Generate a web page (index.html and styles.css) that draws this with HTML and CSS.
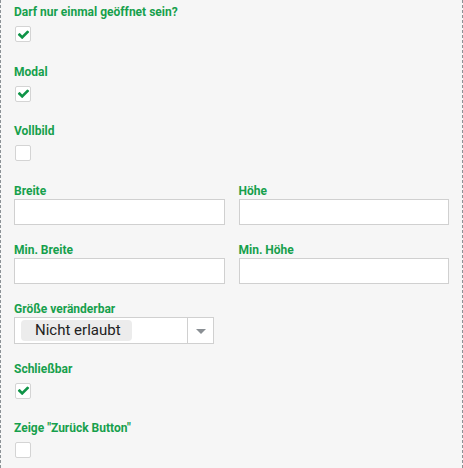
FILE: index.html
```html
<!DOCTYPE html>
<html lang="de">
<head>
    <meta charset="UTF-8">
    <meta name="viewport" content="width=device-width, initial-scale=1.0">
    <title>Fenster Einstellungen</title>
    <link rel="stylesheet" href="styles.css">
</head>
<body>
    <div class="panel">
        <div class="field">
            <label class="field-label">Darf nur einmal geöffnet sein?</label>
            <span class="check is-checked"><svg viewBox="0 0 1792 1792"><path d="M1671 566q0 40-28 68l-724 724-136 136q-28 28-68 28t-68-28l-136-136-362-362q-28-28-28-68t28-68l136-136q28-28 68-28t68 28l294 295 656-657q28-28 68-28t68 28l136 136q28 28 28 68z"/></svg></span>
        </div>
        <div class="field">
            <label class="field-label">Modal</label>
            <span class="check is-checked"><svg viewBox="0 0 1792 1792"><path d="M1671 566q0 40-28 68l-724 724-136 136q-28 28-68 28t-68-28l-136-136-362-362q-28-28-28-68t28-68l136-136q28-28 68-28t68 28l294 295 656-657q28-28 68-28t68 28l136 136q28 28 28 68z"/></svg></span>
        </div>
        <div class="field">
            <label class="field-label">Vollbild</label>
            <span class="check"></span>
        </div>
        <div class="field-row">
            <div class="field-text">
                <label class="field-label">Breite</label>
                <input type="text" class="text-input">
            </div>
            <div class="field-text">
                <label class="field-label">Höhe</label>
                <input type="text" class="text-input">
            </div>
        </div>
        <div class="field-row">
            <div class="field-text">
                <label class="field-label">Min. Breite</label>
                <input type="text" class="text-input">
            </div>
            <div class="field-text">
                <label class="field-label">Min. Höhe</label>
                <input type="text" class="text-input">
            </div>
        </div>
        <div class="field-text">
            <label class="field-label">Größe veränderbar</label>
            <div class="select">
                <span class="select-value">Nicht erlaubt</span>
                <span class="select-arrow"><span class="caret"></span></span>
            </div>
        </div>
        <div class="field">
            <label class="field-label">Schließbar</label>
            <span class="check is-checked"><svg viewBox="0 0 1792 1792"><path d="M1671 566q0 40-28 68l-724 724-136 136q-28 28-68 28t-68-28l-136-136-362-362q-28-28-28-68t28-68l136-136q28-28 68-28t68 28l294 295 656-657q28-28 68-28t68 28l136 136q28 28 28 68z"/></svg></span>
        </div>
        <div class="field">
            <label class="field-label">Zeige "Zurück Button"</label>
            <span class="check"></span>
        </div>
    </div>
</body>
</html>
```

FILE: styles.css
```css
body {
    font-family: Roboto, "Liberation Sans", Arial, sans-serif;
    background-color: #f6f6f6;
    color: #333;
    margin: 0;
    padding: 0;
}
.panel {
    box-sizing: border-box;
    min-height: 468px;
    padding: 4px 13px 0;
    border-left: 1px dashed #8c9296;
    border-right: 1px dashed #8c9296;
}
.field-label {
    display: block;
    font-size: 12px;
    line-height: 16px;
    font-weight: bold;
    color: #16a04c;
}
.field {
    margin-bottom: 21.5px;
}
.check {
    display: flex;
    align-items: center;
    justify-content: center;
    box-sizing: border-box;
    width: 16px;
    height: 16px;
    margin: 6px 0 0 1px;
    background-color: #fff;
    border: 1px solid #d4d4d4;
    border-radius: 2px;
}
.check svg {
    width: 13px;
    height: 13px;
    fill: #0f9447;
}
.field-row {
    display: grid;
    grid-template-columns: 1fr 1fr;
    column-gap: 14px;
}
.field-text {
    margin-bottom: 17px;
}
.text-input {
    display: block;
    box-sizing: border-box;
    width: 100%;
    height: 26px;
    margin: 0;
    background-color: #fff;
    border: 1px solid #d0d0d0;
    border-radius: 0;
}
.select {
    display: flex;
    align-items: center;
    box-sizing: border-box;
    width: 200px;
    height: 27px;
    background-color: #fff;
    border: 1px solid #d0d0d0;
}
.select-value {
    box-sizing: border-box;
    width: 111px;
    height: 21px;
    margin-left: 6px;
    padding-left: 14px;
    font-size: 15px;
    line-height: 21px;
    color: #222;
    background-color: #ececec;
    border-radius: 4px;
}
.select-arrow {
    display: flex;
    align-items: center;
    justify-content: center;
    align-self: stretch;
    margin-left: auto;
    width: 25px;
    border-left: 1px solid #d0d0d0;
}
.caret {
    width: 0;
    height: 0;
    border-left: 5px solid transparent;
    border-right: 5px solid transparent;
    border-top: 5px solid #8a8f94;
    margin-top: 2px;
}
```
